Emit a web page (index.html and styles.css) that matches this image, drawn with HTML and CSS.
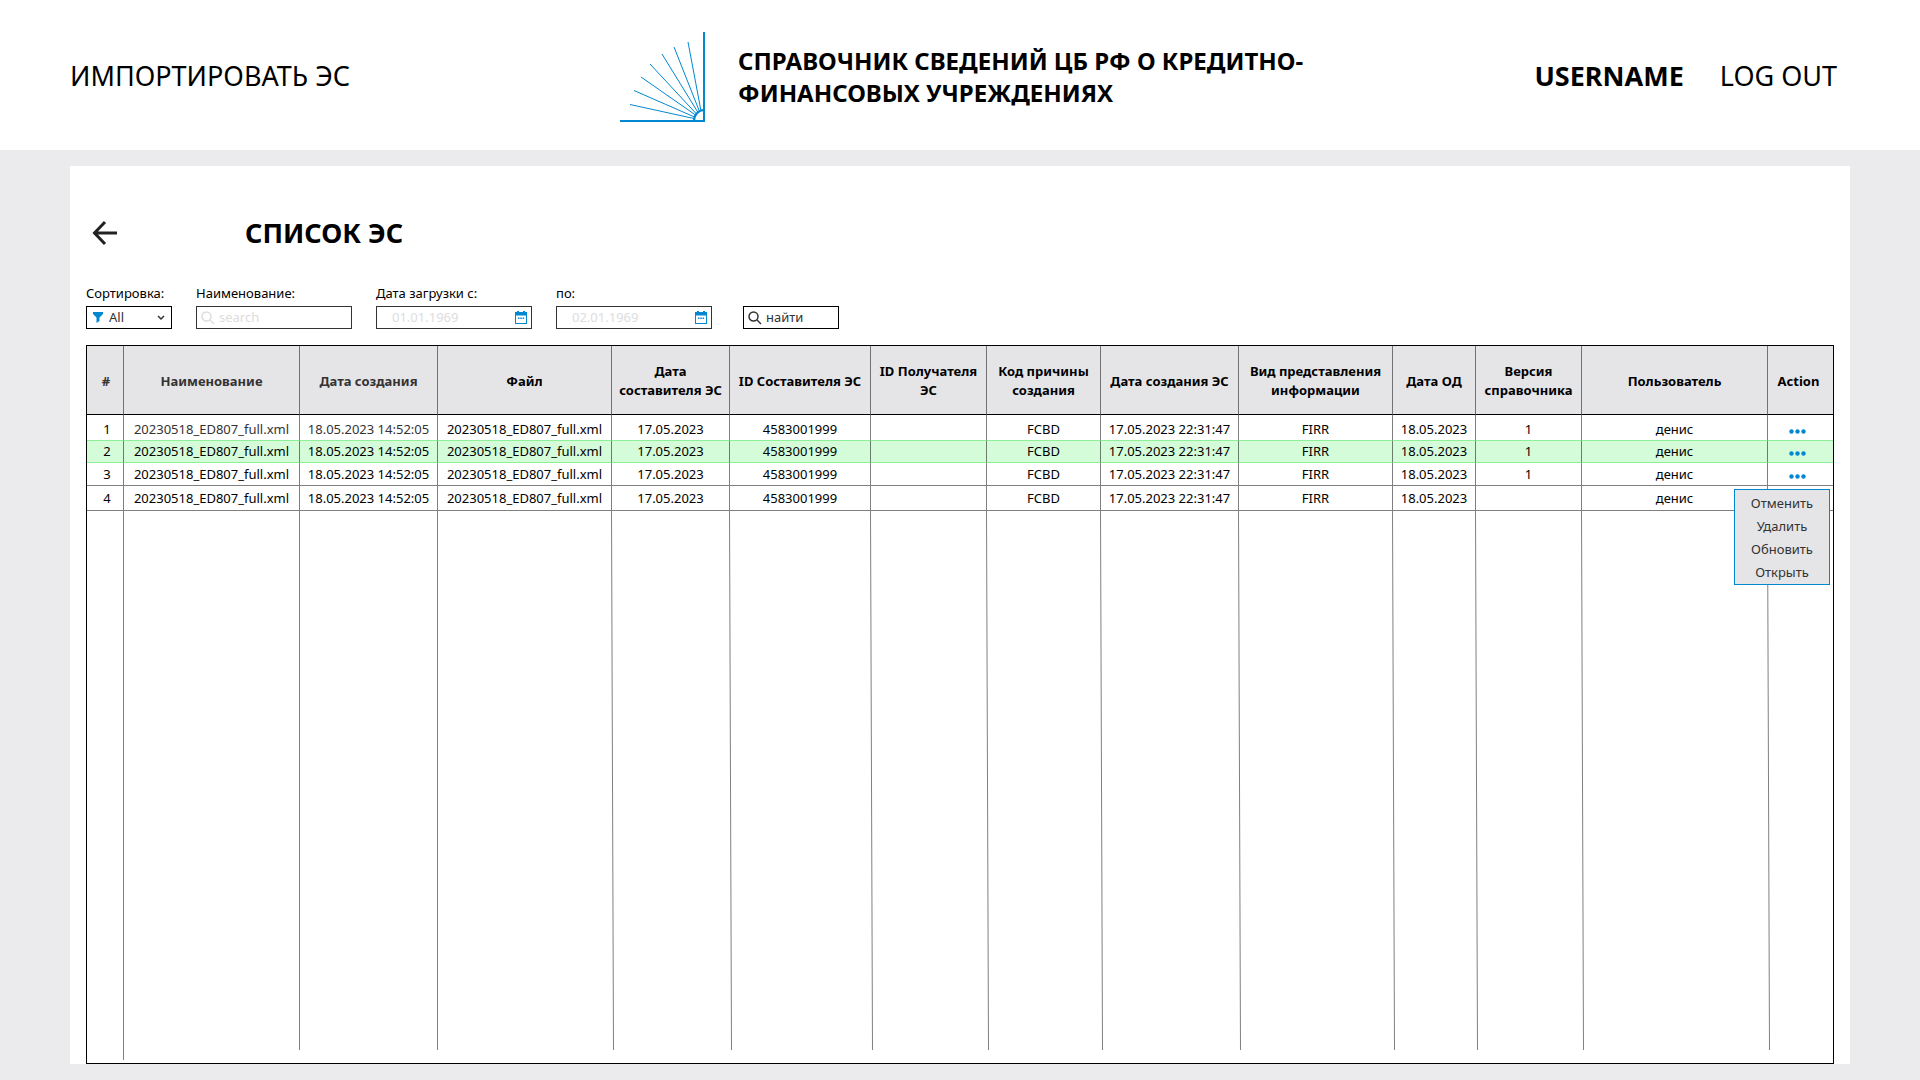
FILE: index.html
```html
<!DOCTYPE html>
<html lang="ru">
<head>
<meta charset="utf-8">
<title>Список ЭС</title>
<link rel="stylesheet" href="styles.css">
</head>
<body>
<header class="topbar">
  <a class="topbar-link" href="#">ИМПОРТИРОВАТЬ ЭС</a>
  <div class="brand">
    <svg class="logo" width="86" height="92" viewBox="0 0 86 92" fill="none" stroke="#0288d1" aria-hidden="true">
      <path d="M84 1V91M0 90H85" stroke-width="2"/>
      <path d="M74 90A10 11 0 0 1 84 79" stroke-width="2"/>
      <path d="M10 73.500L74 87.500M14 59.500L74.500 86M21 46L75.500 84M30 33L76.500 83M42 23L78 81.500M54 16L79.500 80.500M68 11L81 80" stroke-width="1"/>
    </svg>
    <p class="brand-name">СПРАВОЧНИК СВЕДЕНИЙ ЦБ РФ О КРЕДИТНО-<br>ФИНАНСОВЫХ УЧРЕЖДЕНИЯХ</p>
  </div>
  <nav class="account">
    <strong class="username">USERNAME</strong>
    <a class="topbar-link" href="#">LOG OUT</a>
  </nav>
</header>
<main class="panel">
  <div class="title-row">
    <button class="back" type="button" aria-label="Назад">
      <svg width="26" height="26" viewBox="0 0 26 26" fill="none" stroke="#222" stroke-width="3"><path d="M25 13H3M13 2L2.500 13L13 24"/></svg>
    </button>
    <h1 class="title">СПИСОК ЭС</h1>
  </div>
  <form class="filters">
    <div class="field">
      <label for="sort">Сортировка:</label>
      <div class="control control-sort">
        <svg width="10" height="11" viewBox="0 0 10 11" fill="#0288d1"><path d="M0 0H10V2L6.500 5.500V9L3.500 11V5.500L0 2Z"/></svg>
        <select id="sort"><option>All</option></select>
        <svg width="8" height="6" viewBox="0 0 8 6" fill="none" stroke="#333" stroke-width="1.500"><path d="M1 1L4 4L7 1"/></svg>
      </div>
    </div>
    <div class="field">
      <label for="name">Наименование:</label>
      <div class="control control-search">
        <svg width="14" height="14" viewBox="0 0 14 14" fill="none" stroke="#ddd" stroke-width="1.500"><circle cx="5.500" cy="5.500" r="4.500"/><path d="M9 9L13 13"/></svg>
        <input id="name" type="text" placeholder="search">
      </div>
    </div>
    <div class="field">
      <label for="from">Дата загрузки с:</label>
      <div class="control control-date">
        <input id="from" type="text" placeholder="01.01.1969">
        <svg class="calendar" width="12" height="14" viewBox="0 0 12 14" fill="#0288d1"><path fill-rule="evenodd" d="M2 0H4V1H8V0H10V1H12V13H0V1H2ZM1 4.500V12H11V4.500Z"/><path d="M3 6.500H4.500V8H3ZM5.300 6.500H6.800V8H5.300ZM7.600 6.500H9.100V8H7.600Z"/></svg>
      </div>
    </div>
    <div class="field">
      <label for="to">по:</label>
      <div class="control control-date">
        <input id="to" type="text" placeholder="02.01.1969">
        <svg class="calendar" width="12" height="14" viewBox="0 0 12 14" fill="#0288d1"><path fill-rule="evenodd" d="M2 0H4V1H8V0H10V1H12V13H0V1H2ZM1 4.500V12H11V4.500Z"/><path d="M3 6.500H4.500V8H3ZM5.300 6.500H6.800V8H5.300ZM7.600 6.500H9.100V8H7.600Z"/></svg>
      </div>
    </div>
    <button class="find" type="button">
      <svg width="14" height="14" viewBox="0 0 14 14" fill="none" stroke="#333" stroke-width="1.500"><circle cx="5.500" cy="5.500" r="4.500"/><path d="M9 9L13 13"/></svg>
      найти
    </button>
  </form>
  <div class="table-frame">
    <table class="registry">
      <colgroup>
        <col class="c-num"><col class="c-name"><col class="c-created"><col class="c-file"><col class="c-date"><col class="c-author"><col class="c-receiver"><col class="c-reason"><col class="c-es"><col class="c-kind"><col class="c-od"><col class="c-version"><col class="c-user"><col class="c-action">
      </colgroup>
      <thead>
        <tr>
          <th class="dim">#</th><th class="dim">Наименование</th><th class="dim">Дата создания</th><th>Файл</th><th>Дата составителя ЭС</th><th>ID Составителя ЭС</th><th>ID Получателя ЭС</th><th>Код причины создания</th><th>Дата создания ЭС</th><th>Вид представления информации</th><th>Дата ОД</th><th>Версия справочника</th><th>Пользователь</th><th>Action</th>
        </tr>
      </thead>
      <tbody>
        <tr class="row-first">
          <td>1</td><td class="dim">20230518_ED807_full.xml</td><td class="dim">18.05.2023 14:52:05</td><td>20230518_ED807_full.xml</td><td>17.05.2023</td><td>4583001999</td><td></td><td>FCBD</td><td>17.05.2023 22:31:47</td><td>FIRR</td><td>18.05.2023</td><td>1</td><td>денис</td>
          <td><button class="more" type="button" aria-label="Действия"><svg width="17" height="5" viewBox="0 0 17 5" fill="#0288d1"><circle cx="2.500" cy="2.500" r="2.200"/><circle cx="8.500" cy="2.500" r="2.200"/><circle cx="14.500" cy="2.500" r="2.200"/></svg></button></td>
        </tr>
        <tr class="row-selected">
          <td>2</td><td>20230518_ED807_full.xml</td><td>18.05.2023 14:52:05</td><td>20230518_ED807_full.xml</td><td>17.05.2023</td><td>4583001999</td><td></td><td>FCBD</td><td>17.05.2023 22:31:47</td><td>FIRR</td><td>18.05.2023</td><td>1</td><td>денис</td>
          <td><button class="more" type="button" aria-label="Действия"><svg width="17" height="5" viewBox="0 0 17 5" fill="#0288d1"><circle cx="2.500" cy="2.500" r="2.200"/><circle cx="8.500" cy="2.500" r="2.200"/><circle cx="14.500" cy="2.500" r="2.200"/></svg></button></td>
        </tr>
        <tr class="row-plain">
          <td>3</td><td>20230518_ED807_full.xml</td><td>18.05.2023 14:52:05</td><td>20230518_ED807_full.xml</td><td>17.05.2023</td><td>4583001999</td><td></td><td>FCBD</td><td>17.05.2023 22:31:47</td><td>FIRR</td><td>18.05.2023</td><td>1</td><td>денис</td>
          <td class="menu-anchor"><button class="more" type="button" aria-label="Действия"><svg width="17" height="5" viewBox="0 0 17 5" fill="#0288d1"><circle cx="2.500" cy="2.500" r="2.200"/><circle cx="8.500" cy="2.500" r="2.200"/><circle cx="14.500" cy="2.500" r="2.200"/></svg></button>
            <div class="menu">
              <button type="button">Отменить</button>
              <button type="button">Удалить</button>
              <button type="button">Обновить</button>
              <button type="button">Открыть</button>
            </div>
          </td>
        </tr>
        <tr class="row-last">
          <td>4</td><td>20230518_ED807_full.xml</td><td>18.05.2023 14:52:05</td><td>20230518_ED807_full.xml</td><td>17.05.2023</td><td>4583001999</td><td></td><td>FCBD</td><td>17.05.2023 22:31:47</td><td>FIRR</td><td>18.05.2023</td><td></td><td>денис</td><td></td>
        </tr>
        <tr class="row-empty" aria-hidden="true">
          <td class="rule-full"></td><td class="rule"></td><td class="rule"></td>
          <td><svg class="slant" viewBox="0 0 3 540" preserveAspectRatio="none"><path d="M.500 0L2.500 540"/></svg></td>
          <td><svg class="slant" viewBox="0 0 3 540" preserveAspectRatio="none"><path d="M.500 0L2.500 540"/></svg></td>
          <td><svg class="slant" viewBox="0 0 3 540" preserveAspectRatio="none"><path d="M.500 0L2.500 540"/></svg></td>
          <td><svg class="slant" viewBox="0 0 3 540" preserveAspectRatio="none"><path d="M.500 0L2.500 540"/></svg></td>
          <td><svg class="slant" viewBox="0 0 3 540" preserveAspectRatio="none"><path d="M.500 0L2.500 540"/></svg></td>
          <td><svg class="slant" viewBox="0 0 3 540" preserveAspectRatio="none"><path d="M.500 0L2.500 540"/></svg></td>
          <td><svg class="slant" viewBox="0 0 3 540" preserveAspectRatio="none"><path d="M.500 0L2.500 540"/></svg></td>
          <td><svg class="slant" viewBox="0 0 3 540" preserveAspectRatio="none"><path d="M.500 0L2.500 540"/></svg></td>
          <td><svg class="slant" viewBox="0 0 3 540" preserveAspectRatio="none"><path d="M.500 0L2.500 540"/></svg></td>
          <td><svg class="slant" viewBox="0 0 3 540" preserveAspectRatio="none"><path d="M.500 0L2.500 540"/></svg></td>
          <td></td>
        </tr>
      </tbody>
    </table>
  </div>
</main>
</body>
</html>
```
FILE: styles.css
```css
* { box-sizing: border-box; }

body {
  margin: 0;
  min-height: 100vh;
  display: flex;
  flex-direction: column;
  background: #ebebed;
  color: #000;
  font: 13px/21px "Noto Sans", "Open Sans", sans-serif;
}

button, input, select { font: inherit; color: inherit; }
button { padding: 0; border: 0; background: none; }
svg { display: block; flex: none; }

.topbar {
  min-height: 150px;
  padding: 2px 83px 0 70px;
  display: grid;
  grid-template-columns: 550px auto 1fr;
  align-items: center;
  background: #fff;
}
.topbar-link, .username { font-size: 27px; line-height: 36px; }
.topbar-link { color: inherit; text-decoration: none; }
.brand { display: flex; align-items: center; gap: 32px; padding-top: 2px; }
.brand-name { margin: 0; font-size: 24px; line-height: 32px; font-weight: 700; white-space: nowrap; }
.account { display: flex; justify-content: flex-end; gap: 36px; }

.panel {
  flex: 1;
  margin: 16px 70px;
  padding: 47px 16px 0;
  display: flex;
  flex-direction: column;
  background: #fff;
}
.title-row { display: flex; align-items: center; gap: 127px; padding-left: 6px; }
.title { margin: 0; font-size: 27px; line-height: 40px; font-weight: 700; }

.filters { display: flex; align-items: flex-end; gap: 24px; margin: 27px 0 16px; }
.field label { display: block; line-height: 26px; }
.control, .find {
  height: 23px;
  display: flex;
  align-items: center;
  border: 1px solid #333;
  color: #333;
}
.control-sort { width: 86px; gap: 6px; padding: 0 6px; border-color: #000; }
.control-search, .control-date { width: 156px; padding: 0 4px; }
.control-search { gap: 4px; }
.control-date { padding-left: 15px; }
.control input, .control select {
  flex: 1;
  min-width: 0;
  height: 21px;
  padding: 0;
  border: 0;
  outline: 0;
  background: none;
  appearance: none;
}
.control input::placeholder { color: #ddd; opacity: 1; }
.find { width: 96px; margin-left: 7px; padding: 0 4px; gap: 4px; border-color: #000; }

.table-frame { flex: 1; display: grid; padding-bottom: 3px; border: 1px solid #000; }
.registry { width: 100%; height: 100%; table-layout: fixed; border-spacing: 0; text-align: center; }
.c-num { width: 37px; }
.c-name { width: 176px; }
.c-created { width: 138px; }
.c-file { width: 174px; }
.c-date { width: 118px; }
.c-author { width: 141px; }
.c-receiver { width: 116px; }
.c-reason { width: 114px; }
.c-es { width: 138px; }
.c-kind { width: 154px; }
.c-od { width: 83px; }
.c-version { width: 106px; }
.c-user { width: 186px; }
.c-action { width: 65px; }

.registry th {
  height: 69px;
  padding: 2px 2px 0;
  line-height: 19px;
  background: #e5e5e8;
  border-right: 1px solid rgba(0, 0, 0, .5);
  border-bottom: 1px solid #000;
}
.registry td { padding: 0; white-space: nowrap; border-right: 1px solid rgba(0, 0, 0, .5); }
.registry th:first-child, .registry td:first-child { padding-left: 4px; }
.registry th:last-child, .registry td:last-child { border-right: 0; padding-right: 6px; }
.registry .dim { color: #333; }
.registry .row-first td { height: 25px; padding-top: 4px; }
.registry .row-selected td { height: 23px; background: #d5fcd9; border-top: 1px solid #8cf096; border-bottom: 1px solid #8cf096; }
.registry .row-plain td { height: 23px; padding-top: 1px; border-bottom: 1px solid #808080; }
.registry .row-last td { height: 25px; border-bottom: 1px solid #808080; }
.registry .row-empty td { position: relative; border-right: 0; }
.registry .row-empty .rule-full { border-right: 1px solid #808080; }
.rule { background: linear-gradient(#808080, #808080) right top / 1px calc(100% - 10px) no-repeat; }
.slant {
  position: absolute;
  top: 0;
  right: -2px;
  width: 3px;
  height: calc(100% - 10px);
  fill: none;
  stroke: #808080;
}

.more { display: block; margin: 3px auto 0; }
.menu-anchor { position: relative; }
.menu {
  position: absolute;
  top: 26px;
  right: 3px;
  z-index: 1;
  width: 96px;
  padding: 2px 0 0;
  display: grid;
  background: #e5e5e8;
  border: 1px solid #0288d1;
  color: #333;
}
.menu button { line-height: 23px; }
```
